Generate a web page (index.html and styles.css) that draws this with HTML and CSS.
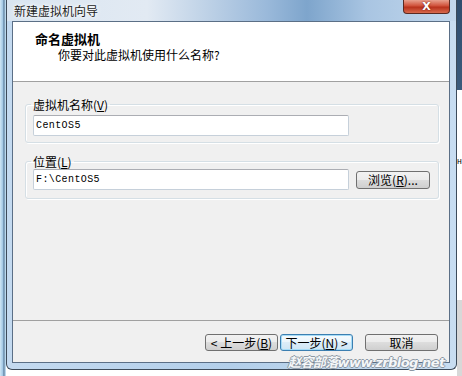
FILE: index.html
```html
<!DOCTYPE html>
<html lang="zh-CN">
<head>
  <meta charset="UTF-8">
  <title>新建虚拟机向导</title>
  <link rel="stylesheet" href="styles.css">
</head>
<body>
  <div class="screen">
    <div class="edge-left"></div>

    <div class="window">
      <div class="titlebar">
        <span class="title">新建虚拟机向导</span>
        <button class="close">X</button>
      </div>

      <div class="client">
        <div class="header">
          <div class="header-title">命名虚拟机</div>
          <div class="header-sub">你要对此虚拟机使用什么名称?</div>
        </div>

        <div class="body">
          <fieldset class="group">
            <legend>虚拟机名称(<u>V</u>)</legend>
            <div class="row">
              <input class="textbox" type="text" value="CentOS5">
            </div>
          </fieldset>

          <fieldset class="group group-loc">
            <legend>位置(<u>L</u>)</legend>
            <div class="row">
              <input class="textbox" type="text" value="F:\CentOS5">
              <button class="btn btn-browse">浏览(<u>R</u>)...</button>
            </div>
          </fieldset>
        </div>

        <div class="footer">
          <button class="btn btn-nav">&lt; 上一步(<u>B</u>)</button>
          <button class="btn btn-nav btn-default">下一步(<u>N</u>) &gt;</button>
          <button class="btn btn-nav btn-cancel">取消</button>
        </div>
      </div>
    </div>

    <div class="edge-right"><span class="peek">H</span></div>

    <!-- watermark stamped over the screenshot -->
    <div class="watermark">赵容部落www.zrblog.net</div>
  </div>
</body>
</html>
```

FILE: styles.css
```css
body {
  margin: 0;
  background-color: #FFFFFF;
  font-family: "Noto Sans CJK SC", "Noto Sans", sans-serif;
  font-size: 12px;
  color: #000;
}
.screen {
  position: relative;
  display: flex;
  width: 462px;
  height: 376px;
  overflow: hidden;
}
.edge-left {
  width: 6px;
  height: 376px;
  background: linear-gradient(90deg, #cfe6f5 0, #9fc6e4 3px, #4f6f8e 4px, #b9d8ee 5px);
}
.edge-right {
  width: 5px;
  height: 376px;
  background: linear-gradient(#2f4d6e 0, #3b5b7c 90px, #ffffff 90px, #ffffff 300px, #d8d8d8 300px);
  position: relative;
}
.peek {
  position: absolute;
  left: 0;
  top: 157px;
  font-family: "Liberation Mono", monospace;
  font-size: 8px;
  line-height: 10px;
}
.window {
  width: 449px;
  height: 369px;
  border: 1px solid #3d4b5a;
  border-top: none;
  border-radius: 0 0 6px 6px;
  background: linear-gradient(90deg, #c4daf0 0, #b3cfea 50%, #c8ddf1 100%);
  display: flex;
  flex-direction: column;
}
.titlebar {
  height: 21px;
  display: flex;
  align-items: flex-start;
  background: linear-gradient(90deg, #d9e5f1 0, #e2eaf3 140px, #9ab9da 260px, #7ea5cc 300px, #a9c5e2 360px, #c3d8ed 100%);
}
.title {
  margin-left: 7px;
  margin-top: 3px;
  line-height: 16px;
  color: #1c1c1c;
  text-shadow: 0 0 6px #ffffff, 0 0 3px #ffffff;
}
.close {
  margin-left: auto;
  margin-right: 6px;
  width: 47px;
  height: 14px;
  padding: 0;
  border: 1px solid #5a2a22;
  border-top: none;
  border-radius: 0 0 4px 4px;
  background: linear-gradient(#e8a08e 0, #d0513a 45%, #b8321c 55%, #d86a4e 100%);
  color: #FFF;
  font-family: "DejaVu Sans", sans-serif;
  font-weight: bold;
  font-size: 11px;
  line-height: 12px;
  text-shadow: 0 0 2px #6a1a10;
}
.client {
  margin: 0 6px 0 5px;
  height: 340px;
  border: 1px solid #5b6f86;
  background-color: #F0F0F0;
  display: flex;
  flex-direction: column;
}
.header {
  background-color: #FFF;
  border-bottom: 1px solid #a0a0a0;
  box-sizing: border-box;
  height: 60px;
  padding-top: 9px;
}
.header-title {
  margin-left: 22px;
  font-size: 13px;
  font-weight: bold;
  line-height: 16px;
}
.header-sub {
  margin-left: 45px;
  line-height: 15px;
}
.body {
  flex: 1;
  padding-top: 15px;
}
.group {
  margin: 0 10px 0 12px;
  padding: 3px 0 6px 7px;
  border: 1px solid #d5dfe5;
  border-radius: 3px;
  box-shadow: inset 1px 1px 0 #fff, 1px 1px 0 #fff;
}
.group legend {
  padding: 0 2px;
  margin-left: -2px;
  line-height: 15px;
  color: #000;
}
.group-loc {
  margin-top: 11px;
  padding-top: 0;
  padding-bottom: 8px;
}
.row {
  display: flex;
  align-items: center;
  gap: 7px;
}
.textbox {
  width: 316px;
  height: 21px;
  box-sizing: border-box;
  margin: 0;
  padding: 0 2px;
  border: 1px solid #c6d0da;
  border-top-color: #abadb3;
  border-radius: 2px;
  background-color: #FFF;
  font-family: "Liberation Mono", monospace;
  font-size: 10px;
  letter-spacing: 0.4px;
  color: #000;
}
.btn {
  margin: 0;
  padding: 0;
  box-sizing: border-box;
  border: 1px solid #707070;
  border-radius: 3px;
  background: linear-gradient(#f2f2f2 0, #ebebeb 50%, #dddddd 50%, #cfcfcf 100%);
  font-family: "Noto Sans CJK SC", sans-serif;
  font-size: 12px;
  line-height: 14px;
  color: #000;
}
.btn-browse {
  width: 74px;
  height: 18px;
}
.footer {
  height: 42px;
  box-sizing: border-box;
  border-top: 1px solid #a0a0a0;
  padding: 13px 11px 0 0;
  display: flex;
  justify-content: flex-end;
  align-items: flex-start;
  gap: 2px;
}
.btn-nav {
  width: 73px;
  height: 17px;
}
.btn-default {
  border-color: #3c7fb1;
  background: linear-gradient(#f6fbfe 0, #eaf5fc 50%, #dcedf8 50%, #cfe6f5 100%);
  box-shadow: inset 0 0 0 1px #a6dcf7;
}
.btn-cancel {
  margin-left: 10px;
}
.watermark {
  position: absolute;
  left: 288px;
  top: 354px;
  font-family: "DejaVu Sans", "Noto Sans CJK SC", sans-serif;
  font-size: 13px;
  font-weight: bold;
  font-style: italic;
  line-height: 18px;
  letter-spacing: -0.6px;
  color: #f4f6f8;
  text-shadow: 1px 0 0 #8c98a4, -1px 0 0 #8c98a4, 0 1px 0 #8c98a4, 0 -1px 0 #8c98a4;
  white-space: nowrap;
}
```
